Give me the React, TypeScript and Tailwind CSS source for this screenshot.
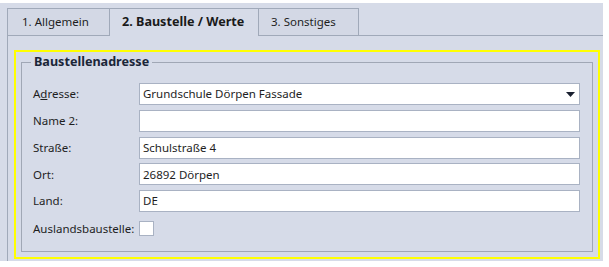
import { useState } from "react";

const FONT = "font-['Noto_Sans','Open_Sans',sans-serif]";

function Field({
	label,
	value,
	accessKey,
}: {
	label: string;
	value: string;
	accessKey?: number;
}) {
	return (
		<div className="flex items-center h-[22px]">
			<div className="w-[106px] text-[11.5px] text-[#1e1e1e]">
				{accessKey !== undefined ? (
					<>
						{label.slice(0, accessKey)}
						<span className="underline">{label[accessKey]}</span>
						{label.slice(accessKey + 1)}
					</>
				) : (
					label
				)}
			</div>
			<div className="flex-1 h-full bg-white border border-[#a9b2c3] flex items-center px-[3px] text-[11.5px] text-[#1e1e1e]">
				{value}
			</div>
		</div>
	);
}

export default function App() {
	const [tab] = useState(1);
	const tabs = ["1. Allgemein", "2. Baustelle / Werte", "3. Sonstiges"];
	const widths = ["w-[103px] pl-[14px]", "w-[149px] pl-[12px]", "w-[100px] pl-[12px]"];

	return (
		<div className={`w-[609px] h-[267px] bg-white pt-[3px] ${FONT}`}>
			<div className="w-[603px] h-[258px] bg-[#d6dbe8] pl-[7px] pt-[5px] flex flex-col">
				{/* Tabs */}
				<div className="flex h-[28px] shrink-0">
					{tabs.map((t, i) => (
						<div
							key={t}
							className={`${widths[i]} h-full flex items-center border-t border-r border-[#a0a9b9] ${
								i === 0 ? "border-l" : ""
							} ${
								i === tab
									? "font-bold text-[12.6px] text-[#1a1a1a] bg-[#d6dbe8]"
									: "border-b text-[11.5px] bg-[#d3d8e5] text-[#1e1e1e]"
							}`}
						>
							{t}
						</div>
					))}
					<div className="flex-1 border-b border-[#a0a9b9]" />
				</div>

				{/* Panel */}
				<div className="flex-1 border-l border-[#a0a9b9] pl-[6px] pt-[14px] pr-[3px] pb-[2px]">
					<div className="h-full border-2 border-[#ffff00] pl-[5px] pr-[5px] pb-[5px] pt-[2px]">
						<fieldset className="h-full border border-[#a0a7b5] pl-[11px] pr-[12px] pt-[13px]">
							<legend className="ml-[-2px] px-[3px] text-[12.6px] font-bold text-[#1b2638] leading-[16px]">
								Baustellenadresse
							</legend>
							<div className="flex flex-col gap-[4.75px]">
								<div className="flex items-center h-[22px]">
									<div className="w-[106px] text-[11.5px] text-[#1e1e1e]">
										A<span className="underline">d</span>resse:
									</div>
									<div className="flex-1 h-full bg-white border border-[#a9b2c3] flex items-center pl-[3px] pr-[4px] text-[11.5px] text-[#1e1e1e]">
										<span className="flex-1">Grundschule Dörpen Fassade</span>
										<svg width="9" height="5" viewBox="0 0 9 5">
											<path d="M0 0H9L4.5 5Z" fill="#1a2030" />
										</svg>
									</div>
								</div>
								<Field label="Name 2:" value="" />
								<Field label="Straße:" value="Schulstraße 4" />
								<Field label="Ort:" value="26892 Dörpen" />
								<Field label="Land:" value="DE" />
								<div className="flex items-center h-[18px] mt-[3px]">
									<div className="w-[106px] text-[11.5px] text-[#1e1e1e]">
										Auslandsbaustelle:
									</div>
									<div className="w-[15px] h-[15px] bg-white border border-[#a9b2c3]" />
								</div>
							</div>
						</fieldset>
					</div>
				</div>
			</div>
		</div>
	);
}
